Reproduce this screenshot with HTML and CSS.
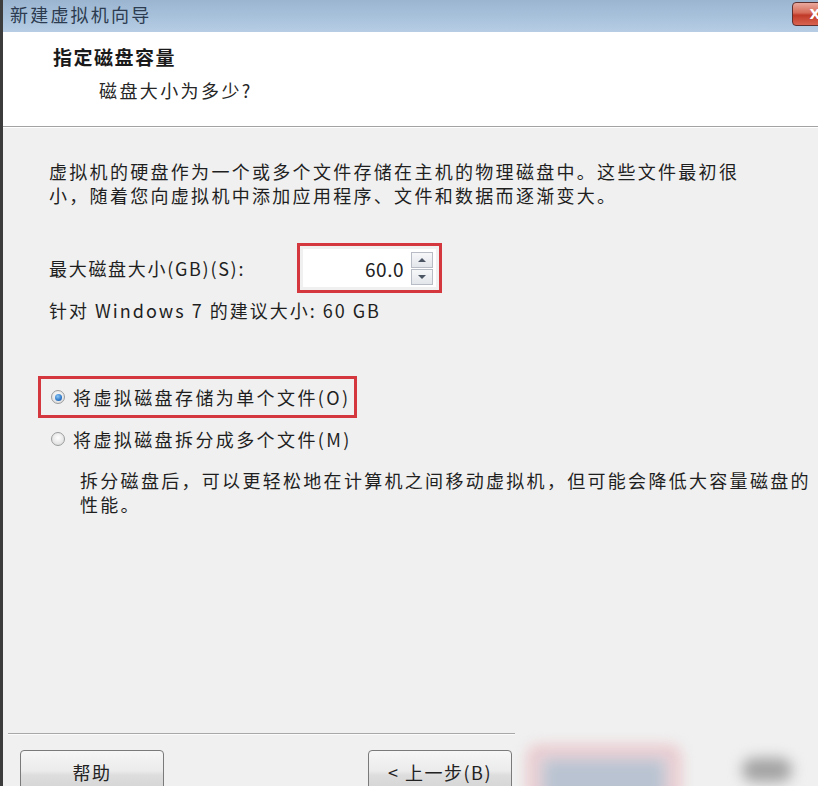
FILE: index.html
```html
<!DOCTYPE html>
<html lang="zh-CN">
<head>
<meta charset="utf-8">
<title>新建虚拟机向导</title>
<link rel="stylesheet" href="styles.css">
</head>
<body>
<div class="window">
  <div class="titlebar">
    <span class="title">新建虚拟机向导</span>
    <div class="close"><span>X</span></div>
  </div>
  <div class="header">
    <div class="h-title">指定磁盘容量</div>
    <div class="h-sub">磁盘大小为多少?</div>
  </div>
  <div class="content">
    <p class="para">虚拟机的硬盘作为一个或多个文件存储在主机的物理磁盘中。这些文件最初很<br>小，随着您向虚拟机中添加应用程序、文件和数据而逐渐变大。</p>
    <div class="size-row">
      <span class="size-label">最大磁盘大小(GB)(S):</span>
      <div class="hl hl-spin">
        <div class="spin">
          <span class="spin-val">60.0</span>
          <div class="spin-btns">
            <div class="spin-btn"><span class="tri-up"></span></div>
            <div class="spin-btn"><span class="tri-down"></span></div>
          </div>
        </div>
      </div>
    </div>
    <div class="rec">针对 Windows 7 的建议大小: 60 GB</div>
    <div class="hl hl-radio">
      <div class="radio-row">
        <span class="radio checked"></span>
        <span class="radio-text">将虚拟磁盘存储为单个文件(O)</span>
      </div>
    </div>
    <div class="radio-row radio-plain">
      <span class="radio"></span>
      <span class="radio-text">将虚拟磁盘拆分成多个文件(M)</span>
    </div>
    <p class="desc">拆分磁盘后，可以更轻松地在计算机之间移动虚拟机，但可能会降低大容量磁盘的<br>性能。</p>
  </div>
  <div class="footer">
    <div class="sep"></div>
    <div class="buttons">
      <div class="btn btn-help">帮助</div>
      <div class="btn btn-back">&lt; 上一步(B)</div>
      <div class="blur-next"><div class="blur-next-inner"></div></div>
      <div class="blur-cancel"></div>
    </div>
  </div>
</div>
</body>
</html>
```
FILE: styles.css
```css
html, body {
  margin: 0;
  padding: 0;
}
body {
  width: 818px;
  height: 786px;
  overflow: hidden;
  background: #f0f0f0;
  font-family: "Noto Sans CJK SC", "Noto Sans", sans-serif;
  color: #1f1f1f;
}
.window {
  width: 818px;
  height: 786px;
  box-sizing: border-box;
  display: flex;
  flex-direction: column;
  border-left: 3px solid #3a3a3a;
  border-image: linear-gradient(to right, #3c3c3c 0, #4a4a4a 66%, #c9c9c9 66%) 1;
  overflow: hidden;
}
.titlebar {
  height: 32px;
  flex: none;
  display: flex;
  align-items: flex-start;
  justify-content: space-between;
  background: linear-gradient(to bottom, #9bb4d0 0%, #a9c2dc 55%, #b6cde4 100%);
  overflow: hidden;
}
.title {
  padding-left: 7px;
  line-height: 29px;
  font-size: 18px;
  letter-spacing: 2.2px;
  color: #2c3b4f;
}
.close {
  margin-top: 2px;
  margin-right: -20px;
  width: 46px;
  height: 24px;
  box-sizing: border-box;
  border: 1px solid #5e3030;
  border-radius: 4px;
  background: linear-gradient(to bottom, #e9a99d 0%, #d66a58 45%, #c03a28 55%, #d8634f 100%);
  display: flex;
  align-items: center;
  justify-content: center;
  color: #fff;
  font-weight: bold;
  font-family: "DejaVu Sans", sans-serif;
  font-size: 14px;
}
.header {
  height: 95px;
  flex: none;
  box-sizing: border-box;
  background: #fff;
  border-bottom: 1px solid #a3a3a3;
  padding-left: 50px;
  padding-top: 13px;
}
.h-title {
  font-size: 19px;
  font-weight: bold;
  line-height: 24px;
  letter-spacing: 1.5px;
  color: #1a1a1a;
}
.h-sub {
  margin-top: 9px;
  padding-left: 46px;
  font-size: 18px;
  line-height: 24px;
  letter-spacing: 2.4px;
  color: #262626;
}
.content {
  flex: 1;
  border-top: 1px solid #fff;
  background: #f0f0f0;
  padding-left: 46px;
  font-size: 18px;
  letter-spacing: 2.3px;
}
.para {
  margin: 31px 0 0;
  line-height: 24px;
  white-space: nowrap;
}
.size-row {
  display: flex;
  align-items: center;
  margin-top: 36px;
  height: 50px;
}
.size-label {
  width: 248px;
  flex: none;
  letter-spacing: 1.7px;
}
.hl {
  border: 3px solid #d4373e;
  box-sizing: border-box;
}
.hl-spin {
  width: 145px;
  height: 50px;
  padding: 3px;
}
.spin {
  height: 38px;
  background: #fff;
  display: flex;
  align-items: center;
  justify-content: flex-end;
  padding-right: 3px;
}
.spin-val {
  font-size: 19px;
  letter-spacing: 0.5px;
  color: #222;
  margin-right: 7px;
}
.spin-btns {
  display: flex;
  flex-direction: column;
  gap: 1px;
}
.spin-btn {
  width: 22px;
  height: 16px;
  box-sizing: border-box;
  border: 1px solid #b8bcc4;
  background: linear-gradient(to bottom, #f6f7f9, #e3e6ea);
  display: flex;
  align-items: center;
  justify-content: center;
}
.tri-up {
  width: 0;
  height: 0;
  border-left: 4px solid transparent;
  border-right: 4px solid transparent;
  border-bottom: 4px solid #4b5563;
}
.tri-down {
  width: 0;
  height: 0;
  border-left: 4px solid transparent;
  border-right: 4px solid transparent;
  border-top: 4px solid #4b5563;
}
.rec {
  margin-top: 5px;
  line-height: 24px;
  letter-spacing: 2px;
}
.hl-radio {
  margin-top: 54px;
  margin-left: -11px;
  width: 319px;
  height: 42px;
  padding-left: 10px;
  display: flex;
  align-items: center;
}
.radio-row {
  display: flex;
  align-items: center;
  line-height: 24px;
}
.radio-plain {
  margin-top: 9px;
  padding-left: 2px;
}
.radio {
  width: 14px;
  height: 14px;
  flex: none;
  box-sizing: border-box;
  border-radius: 50%;
  border: 1px solid #9a9c9e;
  background: radial-gradient(circle at 50% 40%, #ffffff 0%, #e6e6e6 60%, #d2d2d2 100%);
  margin-right: 8px;
  display: flex;
  align-items: center;
  justify-content: center;
}
.radio.checked::after {
  content: "";
  width: 7px;
  height: 7px;
  border-radius: 50%;
  background: radial-gradient(circle at 40% 35%, #8cc7f5 0%, #2f78c8 60%, #1c4f94 100%);
}
.radio-text {
  letter-spacing: 2.4px;
}
.desc {
  margin: 17px 0 0;
  padding-left: 31px;
  line-height: 24px;
  white-space: nowrap;
}
.footer {
  height: 53px;
  flex: none;
  background: #f0f0f0;
}
.sep {
  margin-left: 5px;
  width: 507px;
  border-top: 1px solid #a8a8a8;
  border-bottom: 1px solid #fbfbfb;
}
.buttons {
  display: flex;
  align-items: flex-start;
  margin-top: 15px;
  padding-left: 17px;
}
.btn {
  width: 144px;
  height: 46px;
  box-sizing: border-box;
  border: 1px solid #7a7a7a;
  border-radius: 4px;
  background: linear-gradient(to bottom, #f6f6f6 0%, #ebebeb 45%, #dddddd 55%, #d2d2d2 100%);
  display: flex;
  align-items: center;
  justify-content: center;
  font-size: 18px;
  letter-spacing: 1.5px;
  color: #222;
  padding-bottom: 2px;
}
.btn-back {
  margin-left: 204px;
}
.blur-next {
  margin-left: 16px;
  margin-top: -4px;
  width: 152px;
  height: 56px;
  box-sizing: border-box;
  border: 6px solid #ebb9bf;
  border-radius: 10px;
  background: #e5d7dc;
  filter: blur(7px);
  padding: 8px 10px 0;
}
.blur-next-inner {
  height: 40px;
  background: #b9c3d1;
  border-radius: 4px;
}
.blur-cancel {
  margin-left: 62px;
  margin-top: 8px;
  width: 50px;
  height: 24px;
  border-radius: 12px;
  background: #a3a3a3;
  filter: blur(7px);
}
```
